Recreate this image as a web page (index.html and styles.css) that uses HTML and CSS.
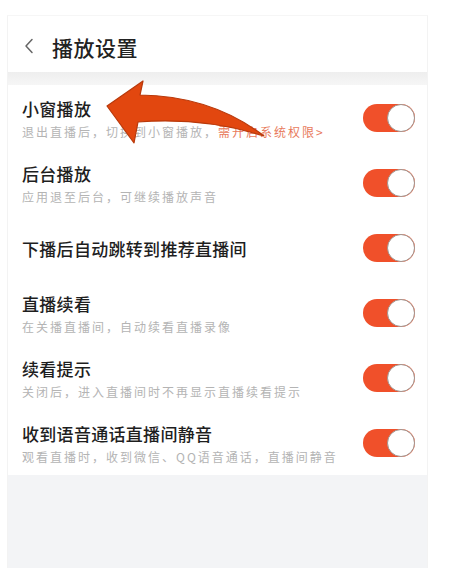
FILE: index.html
```html
<!DOCTYPE html>
<html lang="zh-CN">
<head>
<meta charset="utf-8">
<title>播放设置</title>
<link rel="stylesheet" href="styles.css">
</head>
<body>
<div class="panel">
  <header class="topbar">
    <svg class="back" width="10" height="16" viewBox="0 0 10 16"><path d="M8 1.5 L2 8 L8 14.5" fill="none" stroke="#666" stroke-width="1.5" stroke-linecap="round" stroke-linejoin="round"/></svg>
    <h1 class="title">播放设置</h1>
  </header>
  <div class="band"></div>
  <ul class="list">
    <li class="row">
      <div class="text">
        <div class="name">小窗播放</div>
        <div class="desc">退出直播后，切换到小窗播放，<span class="link">需开启系统权限&gt;</span></div>
      </div>
      <div class="switch"><span class="knob"></span></div>
    </li>
    <li class="row">
      <div class="text">
        <div class="name">后台播放</div>
        <div class="desc">应用退至后台，可继续播放声音</div>
      </div>
      <div class="switch"><span class="knob"></span></div>
    </li>
    <li class="row">
      <div class="text">
        <div class="name">下播后自动跳转到推荐直播间</div>
      </div>
      <div class="switch"><span class="knob"></span></div>
    </li>
    <li class="row">
      <div class="text">
        <div class="name">直播续看</div>
        <div class="desc">在关播直播间，自动续看直播录像</div>
      </div>
      <div class="switch"><span class="knob"></span></div>
    </li>
    <li class="row">
      <div class="text">
        <div class="name">续看提示</div>
        <div class="desc">关闭后，进入直播间时不再显示直播续看提示</div>
      </div>
      <div class="switch"><span class="knob"></span></div>
    </li>
    <li class="row">
      <div class="text">
        <div class="name">收到语音通话直播间静音</div>
        <div class="desc">观看直播时，收到微信、QQ语音通话，直播间静音</div>
      </div>
      <div class="switch"><span class="knob"></span></div>
    </li>
  </ul>
  <div class="footer"></div>
  <svg class="arrow" width="458" height="200" viewBox="0 0 458 200">
    <path d="M107 106 L143 81 L140 95 Q212 96 264 136 Q204 117 138 122 L134 143 Z" fill="#e2470f" stroke="#b8390b" stroke-width="1.2" stroke-linejoin="round"/>
  </svg>
</div>
</body>
</html>
```

FILE: styles.css
```css
* { box-sizing: border-box; }
html, body {
  margin: 0;
  padding: 0;
  background: #ffffff;
  width: 458px;
  height: 568px;
  overflow: hidden;
}
body {
  font-family: "Noto Sans CJK SC", "Noto Sans", sans-serif;
}
.panel {
  margin: 15px 0 0 7px;
  width: 421px;
  height: 553px;
  display: flex;
  flex-direction: column;
  border-left: 1px solid #f3f3f3;
  border-right: 1px solid #f3f3f3;
  border-top: 1px solid #f6f6f6;
}
.topbar {
  height: 56px;
  padding: 6px 0 0 16px;
  display: flex;
  align-items: center;
  gap: 18px;
  background: #fff;
}
.back { display: block; margin-top: -2px; }
.title {
  margin: 0;
  font-size: 21px;
  font-weight: 500;
  color: #222;
  letter-spacing: 0.5px;
}
.band {
  height: 13px;
  background: linear-gradient(#eeeeee, #f6f6f6);
}
.list {
  list-style: none;
  margin: 0;
  padding: 0;
  background: #fff;
}
.row {
  height: 65px;
  display: flex;
  align-items: center;
  justify-content: space-between;
  padding: 0 12px 0 14px;
}
.text {
  display: flex;
  flex-direction: column;
  gap: 4px;
  padding-top: 3px;
}
.name {
  font-size: 17px;
  line-height: 22px;
  font-weight: 500;
  color: #1e1e1e;
  letter-spacing: 0.3px;
}
.desc {
  font-size: 12px;
  line-height: 16px;
  color: #b4b4b4;
  letter-spacing: 2px;
}
.link { color: #e87a5c; }
.switch {
  width: 52px;
  height: 28px;
  border-radius: 14px;
  background: #f0502a;
  display: flex;
  justify-content: flex-end;
}
.knob {
  width: 28px;
  height: 28px;
  border-radius: 50%;
  background: #fff;
  border: 1.5px solid #a09590;
}
.footer {
  flex: 1;
  background: #f3f4f6;
}
.arrow {
  position: absolute;
  left: 0;
  top: 0;
  pointer-events: none;
}
```
